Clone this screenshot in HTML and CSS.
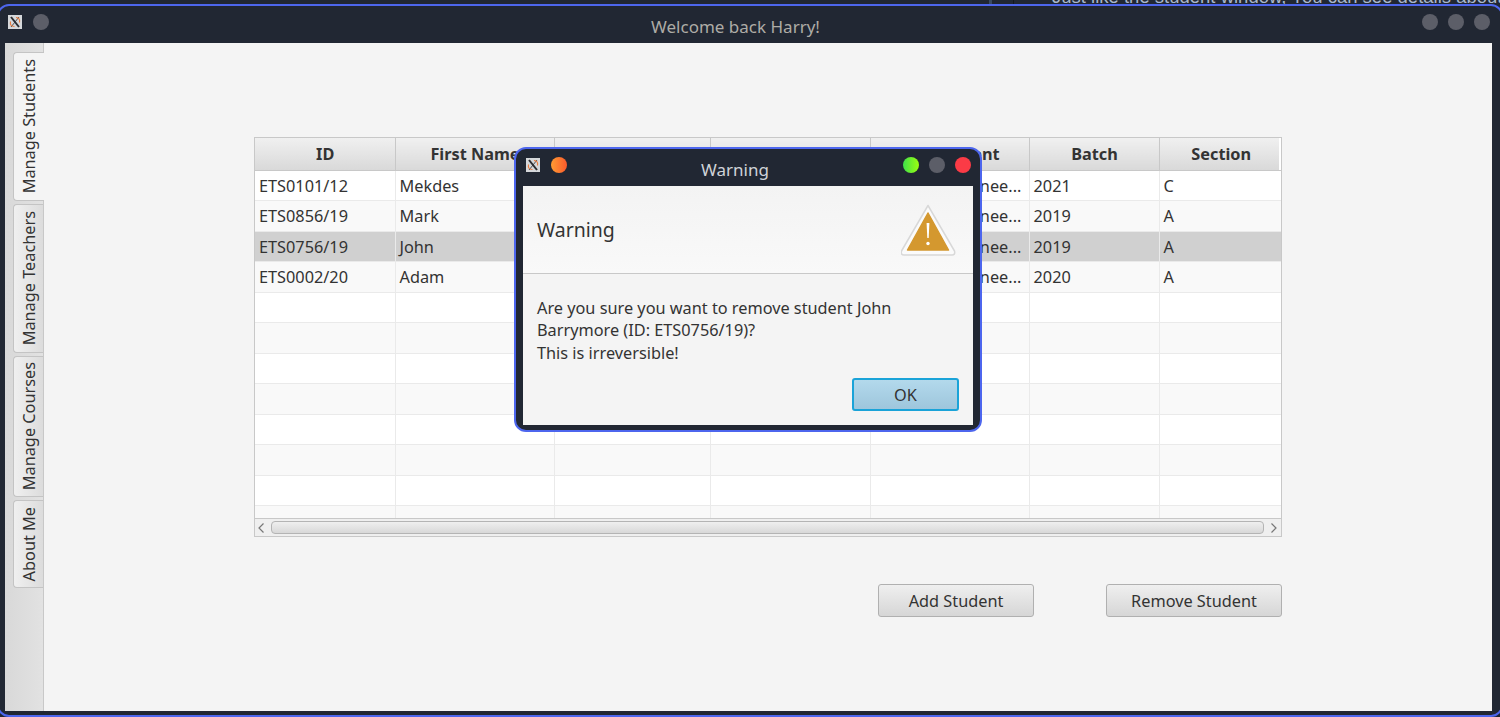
FILE: index.html
```html
<!DOCTYPE html>
<html lang="en">
  <head>
    <meta charset="UTF-8" />
    <meta name="viewport" content="width=device-width, initial-scale=1.0" />
    <title>Welcome back Harry!</title>
    <link rel="stylesheet" href="styles.css">
  </head>
  <body>
    <div class="backdrop">
      <span class="backdrop-rule"></span>
      <span class="backdrop-rule backdrop-rule-dark"></span>
      <p class="backdrop-text">Just like the student window, You can see details about</p>
    </div>

    <div class="window main-window">
      <header class="titlebar">
        <svg class="x-icon" viewBox="0 0 14 14" width="14" height="14">
          <rect width="14" height="14" fill="#d5d7da" />
          <path d="M3 2 L11 12" stroke="#2c2c30" stroke-width="2" />
          <path d="M11 2 L3 12" stroke="#2c2c30" stroke-width="0.8" />
          <path d="M2.5 6.5 Q1.5 11.5 6.5 11.5 M11.5 7.5 Q12.5 3 8 2.5" stroke="#e8793a" stroke-width="1.1" fill="none" />
        </svg>
        <span class="dot dot-grey"></span>
        <span class="titlebar-title">Welcome back Harry!</span>
        <span class="dots">
          <span class="dot dot-grey"></span>
          <span class="dot dot-grey"></span>
          <span class="dot dot-grey"></span>
        </span>
      </header>

      <div class="app">
        <nav class="tabs">
          <div class="tab tab-active tab-students"><span>Manage Students</span></div>
          <div class="tab tab-teachers"><span>Manage Teachers</span></div>
          <div class="tab tab-courses"><span>Manage Courses</span></div>
          <div class="tab tab-about"><span>About Me</span></div>
        </nav>

        <main class="pane">
          <div class="table-box">
            <div class="table-scroll">
              <table class="students">
                <colgroup>
                  <col class="col-id" /><col class="col-first" /><col class="col-last" /><col class="col-mail" />
                  <col class="col-dept" /><col class="col-batch" /><col class="col-section" />
                </colgroup>
                <thead>
                  <tr><th>ID</th><th>First Name</th><th></th><th></th><th>Department</th><th>Batch</th><th>Section</th></tr>
                </thead>
                <tbody>
                  <tr><td>ETS0101/12</td><td>Mekdes</td><td></td><td></td><td>Software Enginee...</td><td>2021</td><td>C</td></tr>
                  <tr><td>ETS0856/19</td><td>Mark</td><td></td><td></td><td>Software Enginee...</td><td>2019</td><td>A</td></tr>
                  <tr class="selected"><td>ETS0756/19</td><td>John</td><td></td><td></td><td>Software Enginee...</td><td>2019</td><td>A</td></tr>
                  <tr><td>ETS0002/20</td><td>Adam</td><td></td><td></td><td>Software Enginee...</td><td>2020</td><td>A</td></tr>
                  <tr><td></td><td></td><td></td><td></td><td></td><td></td><td></td></tr>
                  <tr><td></td><td></td><td></td><td></td><td></td><td></td><td></td></tr>
                  <tr><td></td><td></td><td></td><td></td><td></td><td></td><td></td></tr>
                  <tr><td></td><td></td><td></td><td></td><td></td><td></td><td></td></tr>
                  <tr><td></td><td></td><td></td><td></td><td></td><td></td><td></td></tr>
                  <tr><td></td><td></td><td></td><td></td><td></td><td></td><td></td></tr>
                  <tr><td></td><td></td><td></td><td></td><td></td><td></td><td></td></tr>
                  <tr><td></td><td></td><td></td><td></td><td></td><td></td><td></td></tr>
                </tbody>
              </table>
            </div>
            <div class="scrollbar">
              <svg class="arrow" viewBox="0 0 8 12" width="8" height="12"><path d="M6.5 1.5 L2 6 L6.5 10.5" fill="none" stroke="#777" stroke-width="1.2" /></svg>
              <div class="thumb"></div>
              <svg class="arrow" viewBox="0 0 8 12" width="8" height="12"><path d="M1.5 1.5 L6 6 L1.5 10.5" fill="none" stroke="#777" stroke-width="1.2" /></svg>
            </div>
          </div>
          <div class="actions">
            <button class="btn btn-add">Add Student</button>
            <button class="btn btn-remove">Remove Student</button>
          </div>
        </main>
      </div>
    </div>

    <div class="window dialog">
      <header class="titlebar dialog-bar">
        <svg class="x-icon" viewBox="0 0 14 14" width="14" height="14">
          <rect width="14" height="14" fill="#d5d7da" />
          <path d="M3 2 L11 12" stroke="#2c2c30" stroke-width="2" />
          <path d="M11 2 L3 12" stroke="#2c2c30" stroke-width="0.8" />
          <path d="M2.5 6.5 Q1.5 11.5 6.5 11.5 M11.5 7.5 Q12.5 3 8 2.5" stroke="#e8793a" stroke-width="1.1" fill="none" />
        </svg>
        <span class="dot dot-orange"></span>
        <span class="titlebar-title">Warning</span>
        <span class="dots">
          <span class="dot dot-green"></span>
          <span class="dot dot-grey"></span>
          <span class="dot dot-red"></span>
        </span>
      </header>
      <div class="dialog-body">
        <div class="dialog-head">
          <span class="dialog-heading">Warning</span>
          <svg class="warn-icon" viewBox="1 0 56 52" width="56" height="52">
            <path d="M28 1.5 L54.5 47 Q55.5 51 52 51 L4 51 Q0.5 51 1.5 47 Z" fill="#fbfbfb" stroke="#d8d8d8" stroke-width="1.5" stroke-linejoin="round" />
            <path d="M28 9 L48.5 46 L7.5 46 Z" fill="#d4982f" stroke="#d4982f" stroke-width="1.5" stroke-linejoin="round" />
            <path d="M26.6 19 L29.4 19 L28.7 34 L27.3 34 Z" fill="#fff" />
            <circle cx="28" cy="39.5" r="1.7" fill="#fff" />
          </svg>
        </div>
        <div class="dialog-message">
          <p>Are you sure you want to remove student John<br />Barrymore (ID: ETS0756/19)?<br />This is irreversible!</p>
        </div>
        <div class="dialog-foot">
          <button class="btn btn-ok">OK</button>
        </div>
      </div>
    </div>
  </body>
</html>
```

FILE: styles.css
```css
* {
  box-sizing: border-box;
}
html,
body {
  margin: 0;
  height: 717px;
  overflow: hidden;
}
body {
  position: relative;
  width: 1500px;
  background-color: #212733;
  font-family: "Noto Sans", sans-serif;
  font-size: 16.3px;
  color: #333;
}

/* what shows of the desktop above the window */
.backdrop {
  position: absolute;
  left: 0;
  top: 0;
  width: 100%;
  height: 4px;
  overflow: hidden;
}
.backdrop-text {
  position: absolute;
  left: 1052px;
  top: -13px;
  margin: 0;
  font-family: "Liberation Sans", sans-serif;
  font-size: 18.5px;
  line-height: 20px;
  white-space: nowrap;
  color: #a9b7cc;
}
.backdrop-rule {
  position: absolute;
  left: 989px;
  top: 0;
  width: 3px;
  height: 4px;
  background-color: #3a4a60;
}
.backdrop-rule-dark {
  left: 1013px;
  width: 1px;
  background-color: #15181f;
}

.window {
  position: absolute;
  display: flex;
  flex-direction: column;
  background-color: #212733;
  border: 2px solid #4d66ee;
}
.main-window {
  left: -3px;
  top: 4px;
  width: 1506px;
  height: 713px;
  border-radius: 12px;
  padding: 0 9px 4px 6px;
}
.dialog {
  left: 514px;
  top: 147px;
  width: 468px;
  height: 285px;
  border-radius: 12px;
  padding: 0 7px 5px 7px;
}

.titlebar {
  position: relative;
  display: flex;
  align-items: center;
  flex: none;
  height: 37px;
  padding: 0 0 5px 3px;
  gap: 11px;
}
.titlebar-title {
  position: absolute;
  left: 0;
  right: 26px;
  top: 10px;
  text-align: center;
  font-size: 17px;
  line-height: 22px;
  color: #aeaca6;
}
.dots {
  display: flex;
  gap: 10px;
  margin-left: auto;
  margin-right: 2px;
}
.dot {
  display: block;
  width: 16px;
  height: 16px;
  border-radius: 50%;
}
.dot-grey {
  background-color: #5c5e68;
}
.dot-orange {
  background: linear-gradient(90deg, #ff9c33, #fb5a2c);
}
.dot-green {
  background: linear-gradient(90deg, #3fe04a, #9cff10);
}
.dot-red {
  background-color: #fb3b46;
}
.x-icon {
  flex: none;
}

.app {
  flex: 1;
  display: flex;
  min-height: 0;
}

.tabs {
  flex: none;
  width: 39px;
  padding: 9px 0 0 8px;
  background: linear-gradient(90deg, #d8d8d8, #e2e2e2);
  border-right: 1px solid #c8c8c8;
}
.tab {
  display: flex;
  align-items: center;
  justify-content: center;
  width: 30px;
  margin-bottom: 3px;
  background: linear-gradient(90deg, #f0f0f0, #dcdcdc);
  border: 1px solid #c4c4c4;
  border-right: none;
  border-radius: 4px 0 0 4px;
}
.tab span {
  writing-mode: vertical-rl;
  transform: rotate(180deg);
  white-space: nowrap;
}
.tab-active {
  background: #f4f4f4;
  width: 31px;
}
.tab-students,
.tab-teachers {
  height: 149px;
}
.tab-courses {
  height: 141px;
}
.tab-about {
  height: 88px;
}

.pane {
  flex: 1;
  padding: 94px 210px 0 210px;
  background-color: #f4f4f4;
}

.table-box {
  width: 1028px;
  height: 400px;
  display: flex;
  flex-direction: column;
  border: 1px solid #c8c8c8;
  background-color: #fff;
}
.table-scroll {
  flex: 1;
  min-height: 0;
  overflow: hidden;
}
.students {
  width: 1026px;
  table-layout: fixed;
  border-collapse: collapse;
}
.col-id {
  width: 140px;
}
.col-first {
  width: 159px;
}
.col-last {
  width: 156px;
}
.col-mail {
  width: 160px;
}
.col-dept {
  width: 159px;
}
.col-batch {
  width: 130px;
}
.col-section {
  width: 122px;
}
.students th {
  height: 32px;
  padding: 0 0 0 1px;
  font-size: 16.3px;
  font-weight: 700;
  color: #333;
  background: linear-gradient(#f0f0f0, #d9d9d9);
  border-right: 1px solid #c8c8c8;
  border-bottom: 1px solid #c8c8c8;
}
.students th:last-child {
  padding-left: 2px;
  background: linear-gradient(#f0f0f0, #d9d9d9) left top / calc(100% - 2px) 100% no-repeat;
  border-right: none;
}
.students td {
  height: 30.5px;
  padding: 0.5px 4px 0;
  overflow: hidden;
  white-space: nowrap;
  border-right: 1px solid #eaeaea;
  border-bottom: 1px solid #eaeaea;
}
.students td:last-child {
  border-right: none;
}
.students tbody tr:nth-child(even) {
  background-color: #f9f9f9;
}
.students tbody tr.selected {
  background-color: #d0d0d0;
}

.scrollbar {
  flex: none;
  display: flex;
  align-items: center;
  height: 18px;
  padding: 0 3px 0 2px;
  gap: 6px;
  background-color: #efefef;
  border-top: 1px solid #c8c8c8;
}
.arrow {
  flex: none;
}
.thumb {
  flex: 1;
  height: 13px;
  background: linear-gradient(#efefef, #d8d8d8);
  border: 1px solid #b4b4b4;
  border-radius: 4px;
}

.actions {
  display: flex;
  justify-content: flex-end;
  gap: 72px;
  width: 1028px;
  margin-top: 47px;
}
.btn {
  height: 33px;
  padding: 0;
  font-family: inherit;
  font-size: 16.3px;
  color: #333;
  background: linear-gradient(#efefef, #d6d6d6);
  border: 1px solid #b0b0b0;
  border-radius: 3px;
}
.btn-add {
  width: 156px;
}
.btn-remove {
  width: 176px;
}

.dialog-bar .titlebar-title {
  color: #cfd3d8;
}
.dialog-body {
  flex: 1;
  display: flex;
  flex-direction: column;
  background-color: #f4f4f4;
}
.dialog-head {
  display: flex;
  align-items: center;
  justify-content: space-between;
  height: 88px;
  padding: 0 16px 0 14px;
  background: linear-gradient(#f3f3f3, #f9f9f9);
  border-bottom: 1px solid #c8c8c8;
}
.dialog-heading {
  font-size: 19.5px;
  color: #333;
}
.warn-icon {
  flex: none;
}
.dialog-message {
  padding: 22.5px 14px 0;
}
.dialog-message p {
  margin: 0;
  line-height: 22.5px;
}
.dialog-foot {
  display: flex;
  justify-content: flex-end;
  padding: 13.5px 14px 0 0;
}
.btn-ok {
  width: 107px;
  padding-top: 1px;
  background: linear-gradient(#b3d9ec, #9ec6dc);
  border: 2px solid #1aa3d8;
}
```
